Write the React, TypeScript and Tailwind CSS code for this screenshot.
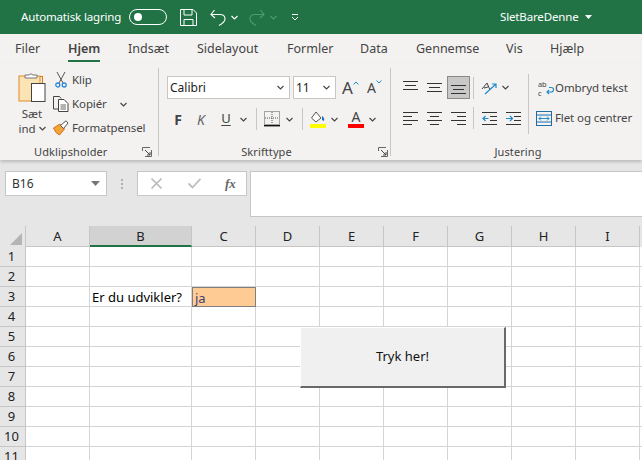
import type { ReactNode } from "react"

const tabs = [
  { name: "Filer", w: 53 },
  { name: "Hjem", w: 60, active: true },
  { name: "Indsæt", w: 69 },
  { name: "Sidelayout", w: 90 },
  { name: "Formler", w: 73 },
  { name: "Data", w: 56 },
  { name: "Gennemse", w: 90 },
  { name: "Vis", w: 44 },
  { name: "Hjælp", w: 50 },
]

const columns = [
  { name: "A", w: 64 },
  { name: "B", w: 102, selected: true },
  { name: "C", w: 64 },
  { name: "D", w: 64 },
  { name: "E", w: 64 },
  { name: "F", w: 64 },
  { name: "G", w: 64 },
  { name: "H", w: 64 },
  { name: "I", w: 64 },
]

const rows = [1, 2, 3, 4, 5, 6, 7, 8, 9, 10, 11]

function Chevron({ color = "#444444", className = "" }: { color?: string; className?: string }) {
  return (
    <svg width="7" height="5" viewBox="0 0 7 5" className={className}>
      <path d="M0.5 1 L3.5 4 L6.5 1" fill="none" stroke={color} strokeWidth="1.1" />
    </svg>
  )
}

function Lines({ widths, aligns }: { widths: number[]; aligns: "left" | "center" | "right" }) {
  return (
    <svg width="15" height="14" viewBox="0 0 15 14">
      {widths.map((w, i) => {
        const x = aligns === "left" ? 0 : aligns === "right" ? 15 - w : (15 - w) / 2
        return <rect key={i} x={x} y={1 + i * 4} width={w} height="1" fill="#333333" />
      })}
    </svg>
  )
}

function VAlign({ pos }: { pos: "top" | "middle" | "bottom" }) {
  const y = pos === "top" ? [1, 5, 9] : pos === "middle" ? [3, 7, 11] : [5, 9, 13]
  return (
    <svg width="15" height="15" viewBox="0 0 15 15">
      <rect x="0" y={y[0]} width="15" height="1" fill="#333333" />
      <rect x="2" y={y[1]} width="11" height="1" fill="#333333" />
      <rect x="0" y={y[2]} width="15" height="1" fill="#333333" />
    </svg>
  )
}

function Indent({ flip }: { flip?: boolean }) {
  return (
    <svg width="15" height="14" viewBox="0 0 15 14">
      <rect x="0" y="1" width="15" height="1" fill="#333333" />
      <rect x="0" y="13" width="15" height="1" fill="#333333" />
      <rect x="8" y="5" width="7" height="1" fill="#333333" />
      <rect x="8" y="9" width="7" height="1" fill="#333333" />
      {flip ? (
        <path d="M0 7.5 H6 M4 5 L6.5 7.5 L4 10" fill="none" stroke="#1e8bcd" strokeWidth="1.2" />
      ) : (
        <path d="M6.5 7.5 H1 M3.5 5 L1 7.5 L3.5 10" fill="none" stroke="#1e8bcd" strokeWidth="1.2" />
      )}
    </svg>
  )
}

function Launcher() {
  return (
    <svg width="10" height="10" viewBox="0 0 10 10">
      <path d="M0.5 4 V0.5 H8" fill="none" stroke="#666666" />
      <path d="M9.5 3 V9.5 H3" fill="none" stroke="#666666" />
      <path d="M3 3 L8 8 M8 5 V8 H5" fill="none" stroke="#444444" />
    </svg>
  )
}

function Separator({ className }: { className: string }) {
  return <div className={`w-px shrink-0 bg-[#c8c6c4] ${className}`} />
}

function GroupLabel({ children }: { children: ReactNode }) {
  return <div className="whitespace-nowrap text-center text-[11px] leading-[16px] tracking-[0.1px] text-[#444444]">{children}</div>
}

function Clipboard() {
  return (
    <div className="relative flex h-full w-[158px] shrink-0 flex-col justify-between">
      <div className="flex pt-[6px]">
        <div className="ml-[14px] flex w-[36px] flex-col items-center pt-[2px]">
          <svg width="28" height="31" viewBox="0 0 28 31">
            <rect x="4.5" y="4.5" width="20" height="23" fill="#fdeccb" stroke="#d97a1a" />
            <rect x="1" y="4" width="21" height="25" fill="#fbe3b3" stroke="#e08a2b" />
            <path d="M7 6 V3 H11 Q13 0.5 15 3 H19 V6 Z" fill="#fff" stroke="#777" />
            <rect x="13.5" y="11.5" width="13.5" height="18" fill="#fff" stroke="#444" />
          </svg>
          <div className="mt-[3px] text-[11.5px] leading-[15px] text-[#444444]">Sæt</div>
          <div className="flex items-center gap-[3px] text-[11.5px] leading-[15px] text-[#444444]">
            ind
            <Chevron />
          </div>
        </div>
        <div className="ml-[3px] flex flex-col gap-[4px] text-[11.5px] leading-[20px] tracking-[-0.1px] text-[#444444]">
          <div className="flex items-center gap-[3px]">
            <span className="flex w-[16px] justify-center">
              <svg width="12" height="16" viewBox="0 0 12 16">
                <path d="M2 0 L8 11 M10 0 L4 11" stroke="#555" fill="none" />
                <circle cx="2.8" cy="13" r="2" fill="none" stroke="#2b88d8" strokeWidth="1.3" />
                <circle cx="9.2" cy="13" r="2" fill="none" stroke="#2b88d8" strokeWidth="1.3" />
              </svg>
            </span>
            Klip
          </div>
          <div className="flex items-center gap-[3px]">
            <span className="flex w-[16px] justify-center">
              <svg width="16" height="16" viewBox="0 0 16 16">
                <path d="M7 13 H0.5 V0.5 H6.5 L8 2.5" fill="none" stroke="#444" />
                <path d="M5.5 3.5 H11 L15 7.5 V15.5 H5.5 Z" fill="#fff" stroke="#444" />
                <path d="M7.5 9 H13 M7.5 11 H13 M7.5 13 H13" stroke="#666" />
              </svg>
            </span>
            Kopiér
            <Chevron className="ml-[10px]" />
          </div>
          <div className="flex items-center gap-[3px]">
            <span className="flex w-[16px] justify-center">
              <svg width="16" height="16" viewBox="0 0 16 16">
                <path d="M0.5 8 L7 4 L11.5 9 L6.5 15 Q3 14 0.5 8 Z" fill="#f2a33a" stroke="#d9701a" />
                <path d="M7.5 5.5 L13 0.8 L15 3 L10.5 8.5 Z" fill="#fff" stroke="#555" />
              </svg>
            </span>
            Formatpensel
          </div>
        </div>
      </div>
      <div className="flex items-center justify-between pl-[34px] pr-[6px]">
        <GroupLabel>Udklipsholder</GroupLabel>
        <Launcher />
      </div>
    </div>
  )
}

function FontGroup() {
  return (
    <div className="flex h-full w-[231px] shrink-0 flex-col justify-between pl-[8px]">
      <div>
        <div className="flex items-center pt-[12px]">
          <div className="flex h-[23px] w-[123px] items-center justify-between border border-[#c8c6c4] bg-white pl-[2px] pr-[5px] text-[12px] text-[#222222]">
            Calibri
            <Chevron />
          </div>
          <div className="ml-[3px] flex h-[23px] w-[43px] items-center justify-between border border-[#c8c6c4] bg-white pl-[2px] pr-[5px] text-[12px] text-[#222222]">
            11
            <Chevron />
          </div>
          <div className="ml-[6px] flex w-[25px] items-start text-[17px] leading-[20px] text-[#444444]">
            A
            <svg width="6" height="4" viewBox="0 0 6 4" className="mt-[3px]">
              <path d="M0.5 3.5 L3 1 L5.5 3.5" fill="none" stroke="#1e8bcd" />
            </svg>
          </div>
          <div className="flex items-start text-[14px] leading-[20px] text-[#444444]">
            A
            <svg width="6" height="4" viewBox="0 0 6 4" className="mt-[2px]">
              <path d="M0.5 0.5 L3 3 L5.5 0.5" fill="none" stroke="#1e8bcd" />
            </svg>
          </div>
        </div>
        <div className="mt-[9px] flex h-[22px] items-center text-[#444444]">
          <span className="w-[22px] text-center text-[14px] font-bold">F</span>
          <span className="w-[24px] text-center text-[14px] italic text-[#666666]">K</span>
          <span className="w-[26px] text-center text-[13px] underline underline-offset-2">U</span>
          <Chevron className="ml-[1px]" />
          <Separator className="ml-[9px] h-[22px]" />
          <svg width="16" height="16" viewBox="0 0 16 16" className="ml-[7px]">
            <rect x="0.5" y="0.5" width="15" height="13" fill="none" stroke="#555" strokeDasharray="1 1" />
            <path d="M8 1 V13 M1 7 H15" stroke="#555" strokeDasharray="1 1" />
            <rect x="0" y="14" width="16" height="1.4" fill="#111" />
          </svg>
          <Chevron className="ml-[6px]" />
          <Separator className="ml-[9px] h-[22px]" />
          <svg width="16" height="17" viewBox="0 0 16 17" className="ml-[7px]">
            <path d="M6 1 L11 7 L6 11 L1.5 7 Z" fill="#fff" stroke="#555" />
            <path d="M12 5 Q15 7 14 10 L12 9 Z" fill="#1e6fc0" />
            <rect x="0" y="13" width="16" height="4" fill="#ffff00" />
          </svg>
          <Chevron className="ml-[5px]" />
          <div className="ml-[10px] flex w-[16px] flex-col items-center">
            <span className="text-[14px] leading-[14px]">A</span>
            <span className="h-[4px] w-[16px] bg-[#ff0000]" />
          </div>
          <Chevron className="ml-[5px]" />
        </div>
      </div>
      <div className="relative pr-[8px]">
        <div className="pr-[16px]">
          <GroupLabel>Skrifttype</GroupLabel>
        </div>
        <span className="absolute right-[2px] top-[3px]">
          <Launcher />
        </span>
      </div>
    </div>
  )
}

function Alignment() {
  return (
    <div className="flex h-full flex-1 flex-col justify-between">
      <div className="flex pt-[12px]">
        <div className="flex flex-col">
          <div className="flex h-[23px] items-center">
            <span className="ml-[12px] flex"><VAlign pos="top" /></span>
            <span className="ml-[9px] flex"><VAlign pos="middle" /></span>
            <span className="ml-[5px] flex h-[23px] w-[23px] items-center justify-center border border-[#8a8a8a] bg-[#c8c8c8]"><VAlign pos="bottom" /></span>
            <Separator className="ml-[3px] h-[22px]" />
            <svg width="16" height="16" viewBox="0 0 16 16" className="ml-[7px]">
              <path d="M1 9 L6 3 L9 10 M3 8 L7 7" fill="none" stroke="#444" />
              <path d="M4 14 L15 4 M11 4 H15 V8" fill="none" stroke="#1e8bcd" strokeWidth="1.2" />
            </svg>
            <Chevron className="ml-[5px]" />
          </div>
          <div className="mt-[8px] flex h-[22px] items-center">
            <span className="ml-[12px] flex"><Lines widths={[15, 9, 15, 9]} aligns="left" /></span>
            <span className="ml-[9px] flex"><Lines widths={[15, 9, 15, 9]} aligns="center" /></span>
            <span className="ml-[9px] flex"><Lines widths={[15, 9, 15, 9]} aligns="right" /></span>
            <Separator className="ml-[7px] h-[22px]" />
            <span className="ml-[8px] flex"><Indent /></span>
            <span className="ml-[9px] flex"><Indent flip /></span>
          </div>
        </div>
        <Separator className="ml-[7px] mt-[-2px] h-[60px]" />
        <div className="flex flex-col text-[11.5px] tracking-[-0.1px] text-[#444444]">
          <div className="flex h-[23px] items-center pl-[9px]">
            <span className="flex w-[17px]">
              <svg width="16" height="18" viewBox="0 0 16 18" className="overflow-visible">
                <path d="M9 13 H13 Q15.5 13 15.5 10.5 Q15.5 8.5 13 8.5 H11 M11 11 L9 13 L11 15" fill="none" stroke="#1e8bcd" strokeWidth="1.2" />
                <text x="0" y="8" fontSize="7.5" fill="#444" fontFamily="Noto Sans">ab</text>
                <text x="0" y="17" fontSize="7.5" fill="#444" fontFamily="Noto Sans">c</text>
              </svg>
            </span>
            Ombryd tekst
          </div>
          <div className="mt-[8px] flex h-[22px] items-center pl-[7px]">
            <svg width="16" height="15" viewBox="0 0 16 15" className="mr-[3px]">
              <rect x="0.5" y="0.5" width="15" height="14" fill="none" stroke="#1e6fa8" />
              <path d="M0 4 H16 M0 11 H16" stroke="#1e6fa8" />
              <path d="M3 7.5 H13 M5 5.5 L3 7.5 L5 9.5 M11 5.5 L13 7.5 L11 9.5" fill="none" stroke="#1e8bcd" />
            </svg>
            <span className="whitespace-nowrap">Flet og centrer</span>
          </div>
        </div>
      </div>
      <div className="pl-[41px]">
        <div className="w-[172px]">
          <GroupLabel>Justering</GroupLabel>
        </div>
      </div>
    </div>
  )
}

function FormulaBar() {
  return (
    <div className="flex h-[66px] items-start bg-[#e6e6e6] pt-[11px]">
      <div className="ml-[5px] flex h-[25px] w-[102px] items-center justify-between border border-[#c6c6c6] bg-white pl-[6px] pr-[6px] text-[12px] text-[#333333]">
        B16
        <svg width="9" height="5" viewBox="0 0 9 5">
          <path d="M0 0 H9 L4.5 5 Z" fill="#777777" />
        </svg>
      </div>
      <div className="ml-[14px] flex h-[25px] w-[2px] flex-col items-center justify-center gap-[2px]">
        <span className="h-[2px] w-[2px] bg-[#b0b0b0]" />
        <span className="h-[2px] w-[2px] bg-[#b0b0b0]" />
        <span className="h-[2px] w-[2px] bg-[#b0b0b0]" />
      </div>
      <div className="ml-[14px] flex h-[25px] w-[110px] items-center border border-[#c6c6c6] bg-white">
        <span className="ml-[13px] flex">
          <svg width="11" height="11" viewBox="0 0 11 11">
            <path d="M0.5 0.5 L10.5 10.5 M10.5 0.5 L0.5 10.5" stroke="#bdbdbd" strokeWidth="1.6" />
          </svg>
        </span>
        <span className="ml-[26px] flex">
          <svg width="13" height="11" viewBox="0 0 13 11">
            <path d="M0.5 5.5 L4.5 9.5 L12.5 0.8" fill="none" stroke="#bdbdbd" strokeWidth="1.8" />
          </svg>
        </span>
        <span className="ml-[24px] font-['Liberation_Serif',serif] text-[13px] font-bold italic leading-none text-[#666666]">
          fx
        </span>
      </div>
      <div className="ml-[3px] h-[46px] flex-1 border border-[#c6c6c6] border-r-0 bg-white" />
    </div>
  )
}

function Sheet() {
  return (
    <div className="relative">
      <div className="flex h-[21px] bg-[#e6e6e6]">
        <div className="flex w-[26px] shrink-0 items-end justify-end border-r border-[#c6c6c6] pb-[2px] pr-[3px]">
          <div className="h-0 w-0 border-b-[12px] border-l-[12px] border-b-[#b4b4b4] border-l-transparent" />
        </div>
        {columns.map((c) => (
          <div
            key={c.name}
            style={{ width: c.w }}
            className={`shrink-0 border-r border-[#c6c6c6] text-center text-[13px] leading-[20px] text-[#222222] ${
              c.selected ? "border-b-2 border-b-[#217346] bg-[#d2d2d2] text-[#0f5c33]" : "border-b border-b-[#c6c6c6]"
            }`}
          >
            {c.name}
          </div>
        ))}
        <div className="flex-1" />
      </div>
      {rows.map((r) => (
        <div key={r} className="flex h-[20px]">
          <div className="w-[26px] shrink-0 border-b border-r border-[#c6c6c6] bg-[#e6e6e6] pr-[2px] text-center text-[13px] leading-[19px] text-[#222222]">
            {r}
          </div>
          {columns.map((c) => {
            const isLabel = r === 3 && c.name === "B"
            const isAnswer = r === 3 && c.name === "C"
            return (
              <div
                key={c.name}
                style={{ width: c.w }}
                className={`shrink-0 whitespace-nowrap pl-[2px] text-[13px] leading-[20px] ${
                  isAnswer
                    ? "border border-[#7f7f7f] bg-[#fecb94] leading-[18px] text-[#3f3f76]"
                    : "border-b border-r border-[#d4d4d4] text-black"
                }`}
              >
                {isLabel && "Er du udvikler?"}
                {isAnswer && "ja"}
              </div>
            )
          })}
          <div className="flex-1 border-b border-[#d4d4d4]" />
        </div>
      ))}
      <button className="absolute left-[300px] top-[101px] flex h-[61px] w-[206px] items-center justify-center border-b-2 border-l border-r-2 border-t border-b-[#696969] border-l-white border-r-[#696969] border-t-white bg-[#f0f0f0] text-[13px] text-[#111111]">
        Tryk her!
      </button>
    </div>
  )
}

export default function App() {
  return (
    <div className="h-[460px] w-[642px] overflow-hidden bg-white font-['Noto_Sans','Open_Sans',sans-serif]">
      <div className="flex h-[34px] items-center bg-[#217346] text-[11.5px] tracking-[-0.15px] text-white">
        <span className="ml-[21px] w-[108px] whitespace-nowrap">Automatisk lagring</span>
        <div className="flex h-[16px] w-[38px] items-center rounded-full border border-white pl-[4px]">
          <span className="h-[8px] w-[8px] rounded-full bg-white" />
        </div>
        <svg width="17" height="17" viewBox="0 0 17 17" className="ml-[13px]">
          <path d="M0.5 0.5 H13 L16.5 4 V16.5 H0.5 Z M4 0.5 V6 H12 V0.5 M4 16.5 V10.5 H13 V16.5" fill="none" stroke="#ffffff" />
        </svg>
        <svg width="16" height="17" viewBox="0 0 16 17" className="ml-[13px]">
          <path d="M1 5.5 H10 Q15 5.5 15 10 Q15 13 9 16.5 M4.5 1 L1 5.5 L5 9" fill="none" stroke="#ffffff" strokeWidth="1.1" />
        </svg>
        <Chevron color="#ffffff" className="ml-[5px]" />
        <svg width="16" height="17" viewBox="0 0 16 17" className="ml-[11px]">
          <path d="M15 5.5 H6 Q1 5.5 1 10 Q1 13 7 16.5 M11.5 1 L15 5.5 L11 9" fill="none" stroke="#4f9a73" strokeWidth="1.1" />
        </svg>
        <Chevron color="#4f9a73" className="ml-[5px]" />
        <svg width="8" height="7" viewBox="0 0 8 7" className="ml-[14px]">
          <path d="M1 0.5 H7 M1 3 L4 6 L7 3" fill="none" stroke="#ffffff" />
        </svg>
        <span className="ml-[201px] whitespace-nowrap">SletBareDenne</span>
        <svg width="7" height="4" viewBox="0 0 7 4" className="ml-[7px]">
          <path d="M0 0 H7 L3.5 4 Z" fill="#ffffff" />
        </svg>
      </div>

      <div className="flex h-[30px] items-start bg-[#f3f2f1] pl-[15px] text-[12.5px] text-[#444444]">
        {tabs.map((t) => (
          <div key={t.name} style={{ width: t.w }} className="shrink-0 pt-[6px] leading-[18px]">
            <span className={`inline-block ${t.active ? "border-b-2 border-[#217346] pb-[2px] font-semibold" : ""}`}>
              {t.name}
            </span>
          </div>
        ))}
      </div>

      <div className="relative flex h-[96px] bg-[#f3f2f1] shadow-[0_2px_3px_rgba(0,0,0,0.18)]">
        <Clipboard />
        <Separator className="mt-[4px] h-[88px]" />
        <FontGroup />
        <Separator className="mt-[4px] h-[88px]" />
        <Alignment />
      </div>

      <FormulaBar />
      <Sheet />
    </div>
  )
}
